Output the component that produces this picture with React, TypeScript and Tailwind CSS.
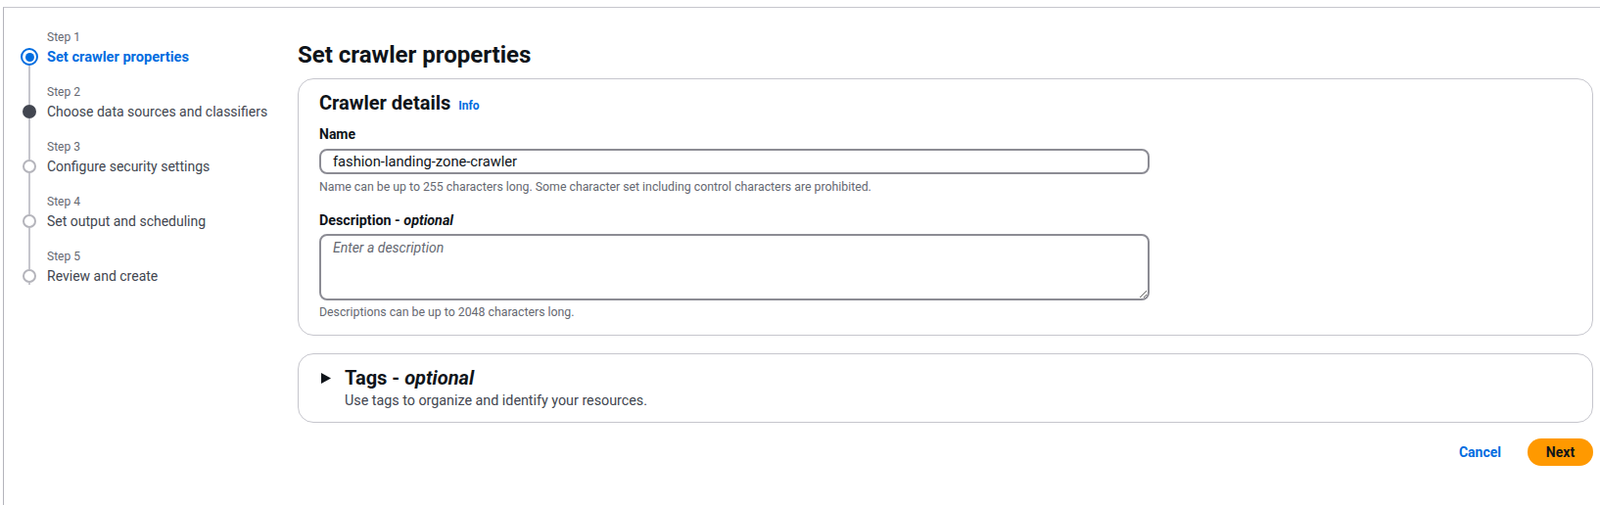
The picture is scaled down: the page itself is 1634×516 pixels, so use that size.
import React from 'react';

type StepState = 'current' | 'next' | 'todo';

const steps: { label: string; title: string; state: StepState }[] = [
    { label: 'Step 1', title: 'Set crawler properties', state: 'current' },
    { label: 'Step 2', title: 'Choose data sources and classifiers', state: 'next' },
    { label: 'Step 3', title: 'Configure security settings', state: 'todo' },
    { label: 'Step 4', title: 'Set output and scheduling', state: 'todo' },
    { label: 'Step 5', title: 'Review and create', state: 'todo' },
];

function StepDot({ state }: { state: StepState }) {
    if (state === 'current') {
        return (
            <div className="flex h-[18px] w-[18px] items-center justify-center rounded-full border-[2.5px] border-[#006ce0] bg-white">
                <div className="h-[9px] w-[9px] rounded-full bg-[#006ce0]" />
            </div>
        );
    }
    return (
        <div className="flex h-[18px] w-[18px] flex-col items-center">
            <div className="h-[2px] w-[2px] bg-[#c6c6cd]" />
            {state === 'next' ? (
                <div className="h-[14px] w-[14px] rounded-full bg-[#424650]" />
            ) : (
                <div className="h-[14px] w-[14px] rounded-full border-2 border-[#b4b4bb] bg-white" />
            )}
            <div className="h-[2px] w-[2px] bg-[#c6c6cd]" />
        </div>
    );
}

function Stepper() {
    return (
        <nav className="w-[300px] shrink-0 pl-[17px] pt-[22px]">
            {steps.map((s, i) => {
                const first = i === 0;
                const last = i === steps.length - 1;
                return (
                    <div key={s.label} className="flex gap-[9px]">
                        <div className="flex w-[18px] flex-col items-center">
                            <div className={`h-[19px] w-[2px] ${first ? '' : 'bg-[#c6c6cd]'}`} />
                            <StepDot state={s.state} />
                            <div className={`w-[2px] flex-1 ${last ? '' : 'bg-[#c6c6cd]'}`} />
                        </div>
                        <div className={last ? '' : 'pb-[18px]'}>
                            <div className="text-[12px] leading-4 text-[#656871]">{s.label}</div>
                            <div
                                className={`mt-[2px] leading-5 ${
                                    s.state === 'current'
                                        ? 'text-[14.6px] font-bold text-[#006ce0]'
                                        : 'text-[14px] text-[#424650]'
                                }`}
                            >
                                {s.title}
                            </div>
                        </div>
                    </div>
                );
            })}
        </nav>
    );
}

export default function App() {
    return (
        <div
            className="min-h-[516px] bg-white text-[#0f141a]"
            style={{ fontFamily: 'Roboto, "Noto Sans", Arial, sans-serif' }}
        >
            <div className="ml-[3px] mt-[7px] flex min-h-[509px] border-l border-t border-l-[#b4b4bb] border-t-[#c6c6cd]">
                <Stepper />

                <main className="mr-[7px] flex-1 pt-[33px]">
                    <h1 className="text-[24px] font-bold leading-[30px]">Set crawler properties</h1>

                    <section className="mt-[9px] rounded-[16px] border border-[#c6c6cd] px-[21px] pb-[15px] pt-[12px]">
                        <div className="flex items-baseline gap-[8px]">
                            <h2 className="text-[20px] font-bold leading-6">Crawler details</h2>
                            <a className="text-[12px] font-bold text-[#006ce0]">Info</a>
                        </div>

                        <label className="mt-[10px] block text-[14px] font-bold leading-5">Name</label>
                        <input
                            readOnly
                            value="fashion-landing-zone-crawler"
                            className="mt-[5px] block h-[26px] w-[848px] rounded-[8px] border-2 border-[#8c8c94] px-3 text-[14.7px] text-[#0f141a] outline-none"
                        />
                        <p className="mt-[5px] text-[12.3px] leading-4 text-[#656871]">
                            Name can be up to 255 characters long. Some character set including control characters are prohibited.
                        </p>

                        <label className="mt-[16px] block text-[14.3px] font-bold leading-5">
                            Description - <i>optional</i>
                        </label>
                        <textarea
                            placeholder="Enter a description"
                            className="mt-[4px] block h-[68px] w-[848px] rounded-[8px] border-2 border-[#8c8c94] px-3 py-[2px] text-[14px] leading-5 outline-none placeholder:italic placeholder:text-[#656871]"
                        />
                        <p className="mt-[4px] text-[12.3px] leading-4 text-[#656871]">
                            Descriptions can be up to 2048 characters long.
                        </p>
                    </section>

                    <section className="mt-[18px] rounded-[16px] border border-[#c6c6cd] pb-[12px] pl-[23px] pr-[20px] pt-[13px]">
                        <div className="flex items-center gap-[14px]">
                            <svg width="10" height="11" viewBox="0 0 10 11" className="shrink-0">
                                <polygon points="0,0 10,5.5 0,11" fill="#0f141a" />
                            </svg>
                            <h2 className="text-[20px] font-bold leading-[22px]">
                                Tags - <i>optional</i>
                            </h2>
                        </div>
                        <p className="ml-[24px] mt-[2px] text-[14.3px] leading-5 text-[#424650]">
                            Use tags to organize and identify your resources.
                        </p>
                    </section>

                    <div className="mt-[16px] flex items-center justify-end gap-[27px]">
                        <button className="text-[14px] font-bold text-[#006ce0]">Cancel</button>
                        <button className="flex h-[28px] w-[67px] items-center justify-center rounded-full bg-[#ff9900] text-[14px] font-bold text-[#0f141a]">
                            Next
                        </button>
                    </div>
                </main>
            </div>
        </div>
    );
}
